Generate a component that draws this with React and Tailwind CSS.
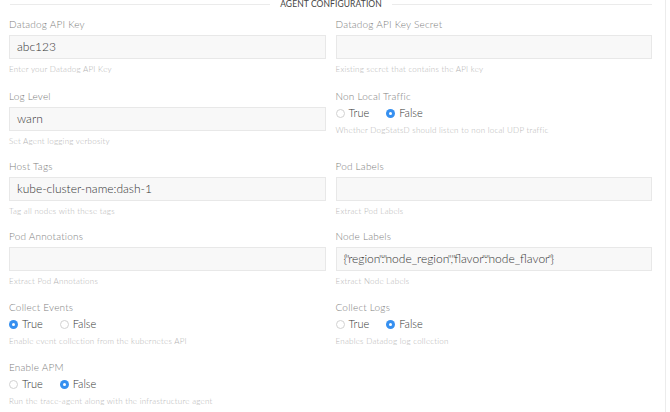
import React from 'react';

// narrow quotes so the JSON value keeps the reference width
const withQuotes = (text) =>
  text.split('"').flatMap((part, i) =>
    i === 0 ? [part] : [<span key={i} className="mx-[-1.5px]">"</span>, part]
  );

const TextField = ({ label, value, help, h }) => (
  <div className={`${h} flex flex-col`}>
    <label className="text-[10px] leading-[14px] text-[#808080] tracking-[0.2px]">{label}</label>
    <div className="mt-[4px] h-[24px] border border-[#e8e8e8] bg-[#f8f8f8] px-[7px] flex items-center text-[12px] text-[#333]">
      {withQuotes(value)}
    </div>
    <p className="mt-[3px] text-[8px] leading-[14px] text-[#b4b4b4] tracking-[0.25px]">{help}</p>
  </div>
);

const Radio = ({ checked, children }) => (
  <span className="flex items-center gap-[4px]">
    {checked ? (
      <span className="w-[9px] h-[9px] rounded-full bg-[#3690f0] flex items-center justify-center">
        <span className="w-[3px] h-[3px] rounded-full bg-white" />
      </span>
    ) : (
      <span className="w-[9px] h-[9px] rounded-full border border-[#d2d2d2] bg-white" />
    )}
    <span className="text-[11px] text-[#333]">{children}</span>
  </span>
);

const RadioField = ({ label, value, help, h }) => (
  <div className={`${h} flex flex-col`}>
    <label className="text-[10px] leading-[14px] text-[#808080] tracking-[0.2px]">{label}</label>
    <div className="mt-[3px] h-[14px] flex items-center gap-[17px]">
      <Radio checked={value === true}>True</Radio>
      <Radio checked={value === false}>False</Radio>
    </div>
    <p className="mt-[3px] text-[8px] leading-[14px] text-[#b4b4b4] tracking-[0.25px]">{help}</p>
  </div>
);

export default function App() {
  return (
    <div className="w-[670px] h-[412px] bg-white overflow-hidden flex font-light" style={{ fontFamily: 'Lato, "Open Sans", sans-serif' }}>
      <div className="w-[666px] border-r border-[#ececec] pl-[9px] pr-[13px]">
        {/* Section header */}
        <div className="h-[9px] flex items-center gap-[10px]">
          <div className="flex-1 h-px bg-[#ebebeb] ml-px" />
          <span className="text-[8.5px] leading-[9px] tracking-[0.1px] text-[#444] font-normal">AGENT CONFIGURATION</span>
          <div className="flex-1 h-px bg-[#ebebeb]" />
        </div>

        <div className="mt-[8px] grid grid-cols-2 gap-x-[10px]">
          <TextField h="h-[72px]" label="Datadog API Key" value="abc123" help="Enter your Datadog API Key" />
          <TextField h="h-[72px]" label="Datadog API Key Secret" value="" help="Existing secret that contains the API key" />

          <TextField h="h-[70px]" label="Log Level" value="warn" help="Set Agent logging verbosity" />
          <RadioField h="h-[70px]" label="Non Local Traffic" value={false} help="Whether DogStatsD should listen to non local UDP traffic" />

          <TextField h="h-[70px]" label="Host Tags" value="kube-cluster-name:dash-1" help="Tag all nodes with these tags" />
          <TextField h="h-[70px]" label="Pod Labels" value="" help="Extract Pod Labels" />

          <TextField h="h-[71px]" label="Pod Annotations" value="" help="Extract Pod Annotations" />
          <TextField h="h-[71px]" label="Node Labels" value={'{"region":"node_region","flavor":"node_flavor"}'} help="Extract Node Labels" />

          <RadioField h="h-[60px]" label="Collect Events" value={true} help="Enable event collection from the kubernetes API" />
          <RadioField h="h-[60px]" label="Collect Logs" value={false} help="Enables Datadog log collection" />

          <RadioField h="h-[50px]" label="Enable APM" value={false} help="Run the trace-agent along with the infrastructure agent" />
        </div>
      </div>
    </div>
  );
}
